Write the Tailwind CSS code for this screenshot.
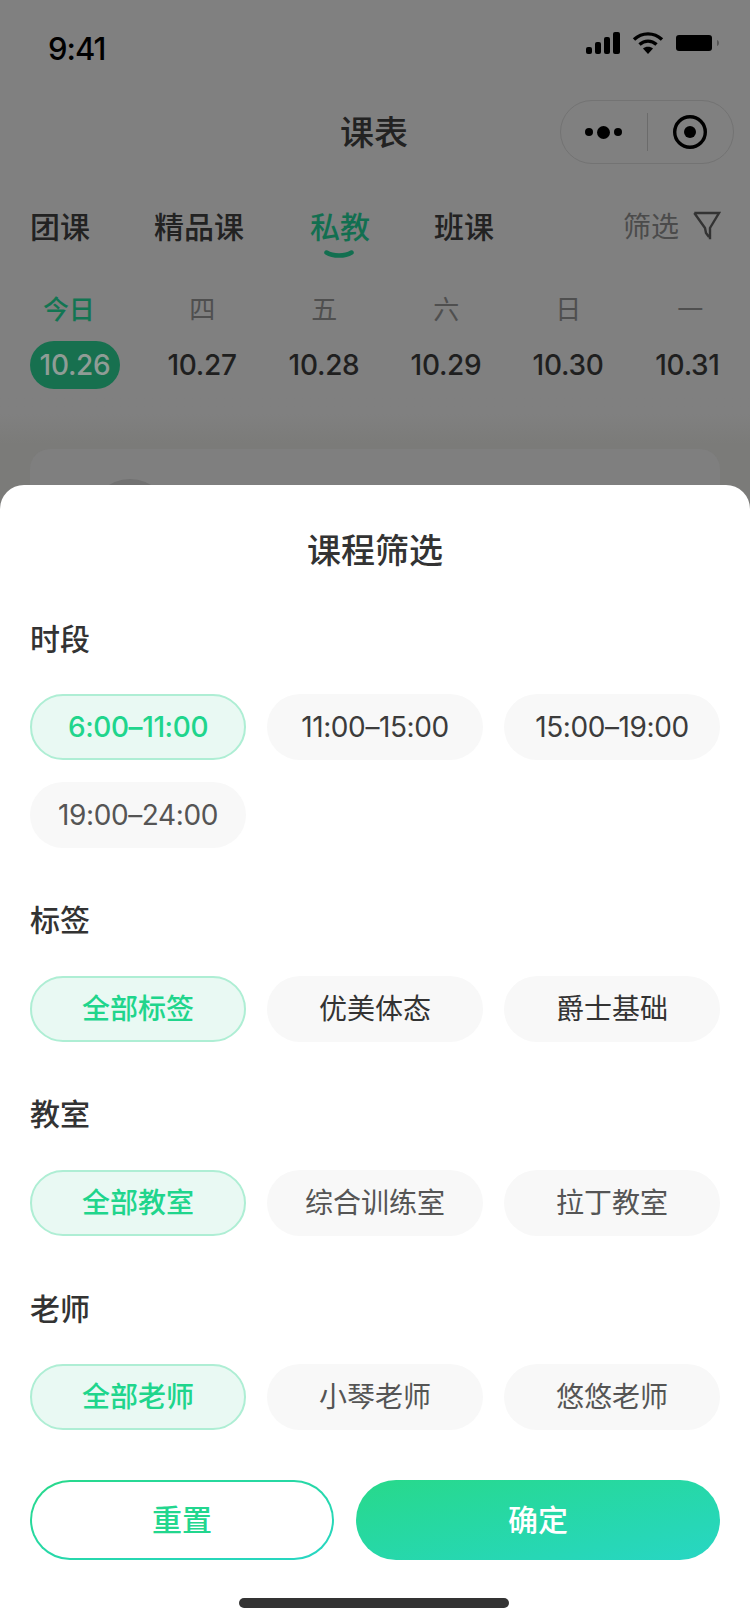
<!DOCTYPE html>
<html lang="zh">
<head>
<meta charset="utf-8">
<script src="https://cdn.jsdelivr.net/npm/@tailwindcss/browser@4"></script>
</head>
<body class="m-0">
<div class="relative w-[750px] h-[1624px] overflow-hidden bg-[#808080] font-['Inter','Noto_Sans_CJK_SC',sans-serif] text-[#1f1f1f]">
  <!-- status bar -->
  <div class="flex justify-between items-center h-[88px] pt-[10px] pl-[48px] pr-[30px]">
    <span class="text-[31px] font-medium tracking-[-1px] text-black">9:41</span>
    <div class="flex items-center gap-[11px] mb-[12px]">
      <svg width="36" height="24" viewBox="0 0 36 24" fill="#000"><rect x="1" y="16" width="6" height="7" rx="2"/><rect x="10" y="11" width="6" height="12" rx="2"/><rect x="19" y="6" width="6" height="17" rx="2"/><rect x="28" y="1" width="7" height="22" rx="2"/></svg>
      <svg width="32" height="24" viewBox="0 0 32 24" fill="none" stroke="#000" stroke-width="3.4"><path d="M2 8.5C10 1 22 1 30 8.5"/><path d="M7.5 13.5C12.5 9 19.5 9 24.5 13.5"/><path d="M16 23l-5-5.5C13.5 15 18.500 15 21 17.500z" fill="#000" stroke="none"/></svg>
      <svg class="ml-[1px]" width="44" height="24" viewBox="0 0 44 24"><rect x="0" y="4" width="36" height="16" rx="3" fill="#000"/><path d="M41 9v6c1.500-.5 2-2 2-3s-.5-2.500-2-3z" fill="#555"/></svg>
    </div>
  </div>
  <!-- nav -->
  <div class="relative flex justify-center items-center h-[88px] pr-[2px]">
    <span class="text-[34px] font-medium text-[#222]">课表</span>
    <div class="absolute left-[560px] top-[12px] w-[174px] h-[64px] rounded-full border border-[#737373] flex items-center">
      <div class="flex-1 flex justify-center items-center gap-[4px]">
        <span class="w-[8px] h-[8px] rounded-full bg-black"></span><span class="w-[13px] h-[13px] rounded-full bg-black"></span><span class="w-[8px] h-[8px] rounded-full bg-black"></span>
      </div>
      <div class="w-px h-[38px] bg-[#6b6b6b]"></div>
      <div class="flex-1 flex justify-center items-center">
        <svg width="34" height="34" viewBox="0 0 34 34"><circle cx="17" cy="17" r="15.300" fill="none" stroke="#000" stroke-width="3.400"/><circle cx="17" cy="17" r="6" fill="#000"/></svg>
      </div>
    </div>
  </div>
  <!-- tabs -->
  <div class="flex items-center h-[60px] mt-[21px] px-[30px] text-[30px] font-medium text-[#222]">
    <span class="w-[124px]">团课</span>
    <span class="w-[156px]">精品课</span>
    <span class="relative w-[124px] text-[#126f50]">私教
      <svg class="absolute left-[14px] top-[45px]" width="30" height="10" viewBox="0 0 30 10" fill="none"><path d="M2.500 2.500C9 6.500 21 6.500 27.500 2.500" stroke="#126f50" stroke-width="4.500" stroke-linecap="round"/></svg>
    </span>
    <span>班课</span>
    <div class="ml-auto flex items-center gap-[14px] text-[28px] font-normal text-[#4b4b4b]">
      <span>筛选</span>
      <svg class="mb-[2px] mr-[-1px]" width="28" height="30" viewBox="0 0 28 30" fill="none" stroke="#333" stroke-width="2.400"><path d="M1.300 2H26L17 17V28.300M1.300 2L12 17L13 22L16 26"/></svg>
    </div>
  </div>
  <!-- dates -->
  <div class="grid grid-cols-[111px_repeat(5,122px)] mt-[35px] pl-[30px] text-center tracking-[-0.3px]">
    <div class="flex flex-col items-start"><span class="ml-[13px] h-[36px] text-[26px] font-medium leading-[36px] text-[#127552]">今日</span><span class="mt-[13px] w-[90px] h-[48px] rounded-full bg-[#17704f] text-[28px] font-medium leading-[48px] text-[#8f9c96]">10.26</span></div>
    <div class="flex flex-col items-center"><span class="h-[36px] text-[26px] leading-[36px] text-[#4f4f4f]">四</span><span class="mt-[13px] h-[48px] text-[28px] font-medium leading-[48px]">10.27</span></div>
    <div class="flex flex-col items-center"><span class="h-[36px] text-[26px] leading-[36px] text-[#4f4f4f]">五</span><span class="mt-[13px] h-[48px] text-[28px] font-medium leading-[48px]">10.28</span></div>
    <div class="flex flex-col items-center"><span class="h-[36px] text-[26px] leading-[36px] text-[#4f4f4f]">六</span><span class="mt-[13px] h-[48px] text-[28px] font-medium leading-[48px]">10.29</span></div>
    <div class="flex flex-col items-center"><span class="h-[36px] text-[26px] leading-[36px] text-[#4f4f4f]">日</span><span class="mt-[13px] h-[48px] text-[28px] font-medium leading-[48px]">10.30</span></div>
    <div class="flex flex-col items-center"><span class="h-[36px] text-[26px] leading-[36px] text-[#4f4f4f]">一</span><span class="mt-[13px] mr-[5px] h-[48px] text-[28px] font-medium leading-[48px]">10.31</span></div>
  </div>
  <!-- list behind -->
  <div class="h-[200px] px-[30px] pt-[60px] bg-gradient-to-b from-[#808080] from-[25px] to-[#7b7b79] to-[55px]">
    <div class="h-[130px] rounded-[20px] bg-[#7f7f7f] pt-[30px] pl-[60px]">
      <div class="w-[80px] h-[80px] rounded-full bg-[#717171]"></div>
    </div>
  </div>
  <!-- sheet -->
  <div class="absolute left-0 right-0 top-[485px] bottom-0 rounded-t-[24px] bg-white px-[30px] text-[#333]">
    <div class="h-[130px] pt-[42px] text-center text-[34px] leading-[48px] font-medium">课程筛选</div>
    <div class="text-[30px] leading-[48px] font-medium">时段</div>
    <div class="grid grid-cols-3 gap-x-[21px] gap-y-[22px] mt-[31px] text-[28px] tracking-[-0.4px]">
      <div class="h-[66px] rounded-full bg-[#e9f9f3] border-2 border-[#aeeed4] flex items-center justify-center text-[#20d58c] font-medium">6:00–11:00</div>
      <div class="h-[66px] rounded-full bg-[#f8f8f8] flex items-center justify-center text-[#3c3c3c]">11:00–15:00</div>
      <div class="h-[66px] rounded-full bg-[#f8f8f8] flex items-center justify-center text-[#3c3c3c]">15:00–19:00</div>
      <div class="h-[66px] rounded-full bg-[#f8f8f8] flex items-center justify-center text-[#555]">19:00–24:00</div>
    </div>
    <div class="mt-[48px] text-[30px] leading-[48px] font-medium">标签</div>
    <div class="grid grid-cols-3 gap-x-[21px] mt-[32px] text-[28px]">
      <div class="h-[66px] rounded-full bg-[#e9f9f3] border-2 border-[#aeeed4] flex items-center justify-center text-[#20d58c] font-medium">全部标签</div>
      <div class="h-[66px] rounded-full bg-[#f8f8f8] flex items-center justify-center text-[#333]">优美体态</div>
      <div class="h-[66px] rounded-full bg-[#f8f8f8] flex items-center justify-center text-[#333]">爵士基础</div>
    </div>
    <div class="mt-[48px] text-[30px] leading-[48px] font-medium">教室</div>
    <div class="grid grid-cols-3 gap-x-[21px] mt-[32px] text-[28px]">
      <div class="h-[66px] rounded-full bg-[#e9f9f3] border-2 border-[#aeeed4] flex items-center justify-center text-[#20d58c] font-medium">全部教室</div>
      <div class="h-[66px] rounded-full bg-[#f8f8f8] flex items-center justify-center text-[#555]">综合训练室</div>
      <div class="h-[66px] rounded-full bg-[#f8f8f8] flex items-center justify-center text-[#555]">拉丁教室</div>
    </div>
    <div class="mt-[49px] text-[30px] leading-[48px] font-medium">老师</div>
    <div class="grid grid-cols-3 gap-x-[21px] mt-[31px] text-[28px]">
      <div class="h-[66px] rounded-full bg-[#e9f9f3] border-2 border-[#aeeed4] flex items-center justify-center text-[#20d58c] font-medium">全部老师</div>
      <div class="h-[66px] rounded-full bg-[#f8f8f8] flex items-center justify-center text-[#555]">小琴老师</div>
      <div class="h-[66px] rounded-full bg-[#f8f8f8] flex items-center justify-center text-[#555]">悠悠老师</div>
    </div>
    <div class="flex gap-[22px] mt-[50px]">
      <div class="w-[304px] h-[80px] rounded-full p-[2px] bg-gradient-to-br from-[#28d98a] to-[#28d6c4]">
        <div class="w-full h-full rounded-full bg-white flex items-center justify-center text-[30px] font-medium text-[#22d68e]">重置</div>
      </div>
      <div class="flex-1 h-[80px] rounded-full bg-gradient-to-br from-[#28d98a] to-[#28d6c4] flex items-center justify-center text-[30px] font-medium text-white">确定</div>
    </div>
    <div class="w-[270px] h-[10px] rounded-full bg-[#333] mx-[-1px] ml-[209px] mt-[38px]"></div>
  </div>
</div>
</body>
</html>
